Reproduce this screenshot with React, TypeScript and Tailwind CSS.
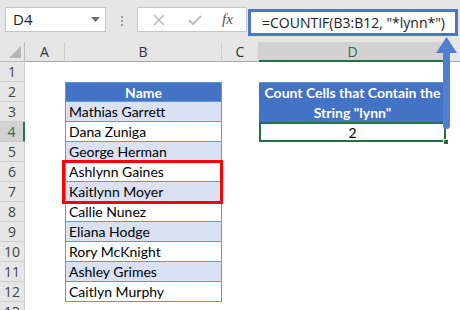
const names = [
  "Mathias Garrett",
  "Dana Zuniga",
  "George Herman",
  "Ashlynn Gaines",
  "Kaitlynn Moyer",
  "Callie Nunez",
  "Eliana Hodge",
  "Rory McKnight",
  "Ashley Grimes",
  "Caitlyn Murphy",
];

const cellFont = { fontFamily: "Lato, 'Liberation Sans', sans-serif" };

const RowLabel = ({ n }: { n: number }) => (
  <div
    className={
      n === 4
        ? "bg-[#d2d2d2] border-b border-[#c8c8c8] border-r-2 border-r-[#217346] text-[#2b6a47] text-[14px] flex items-center justify-center"
        : "bg-[#e6e6e6] border-b border-r border-[#cfcfcf] text-[#444] text-[14px] flex items-center justify-center"
    }
    style={{ fontFamily: "'Open Sans', sans-serif" }}
  >
    {n}
  </div>
);

const App = () => {
  const rows = Array.from({ length: 13 }, (_, i) => i + 1);

  return (
    <main className="w-[460px] h-[310px] overflow-hidden bg-white relative">
      {/* formula bar */}
      <header className="h-[42px] bg-[#e6e6e6] flex items-start">
        <div className="ml-[5px] mt-[7px] w-[101px] h-[25px] bg-white border border-[#c6c6c6] flex items-center justify-between pl-[7px] pr-[5px]">
          <span className="text-[15px] text-[#222]" style={{ fontFamily: "'Open Sans', sans-serif" }}>
            D4
          </span>
          <svg width="9" height="5" viewBox="0 0 9 5">
            <polygon points="0,0 9,0 4.5,5" fill="#6f6f6f" />
          </svg>
        </div>
        <div className="w-[31px] h-[42px] flex flex-col items-center justify-center gap-[2px]">
          <span className="w-[2px] h-[2px] bg-[#9a9a9a]" />
          <span className="w-[2px] h-[2px] bg-[#9a9a9a]" />
          <span className="w-[2px] h-[2px] bg-[#9a9a9a]" />
        </div>
        <div className="mt-[7px] w-[110px] h-[25px] bg-white border border-[#c6c6c6] flex items-center">
          <svg width="14" height="14" viewBox="0 0 14 14" className="ml-[14px]">
            <path d="M2 2 L12 12 M12 2 L2 12" stroke="#bdbdbd" strokeWidth="1.6" />
          </svg>
          <svg width="16" height="14" viewBox="0 0 16 14" className="ml-[21px]">
            <path d="M2 7 L6 11 L14 3" stroke="#bdbdbd" strokeWidth="2" fill="none" />
          </svg>
          <span
            className="ml-[19px] text-[15px] italic text-[#555]"
            style={{ fontFamily: "'Liberation Serif', serif" }}
          >
            fx
          </span>
        </div>
        <div className="ml-[1px] mt-[9px] w-[210px] h-[27px] bg-white border-[3px] border-[#4a78c8] flex items-center pl-[11px]">
          <span className="text-[14px] text-[#222] whitespace-nowrap" style={{ fontFamily: "'Open Sans', sans-serif" }}>
            =COUNTIF(B3:B12, "*lynn*")
          </span>
        </div>
      </header>

      {/* sheet */}
      <section className="grid grid-cols-[25px_40px_157px_37px_187px_1fr] auto-rows-[20px]">
        {/* column headers */}
        <div className="bg-[#e6e6e6] border-r border-b border-[#bdbdbd] flex items-end justify-end p-[3px]">
          <svg width="12" height="12" viewBox="0 0 12 12">
            <polygon points="12,0 12,12 0,12" fill="#b4b4b4" />
          </svg>
        </div>
        {["A", "B", "C"].map((c) => (
          <div
            key={c}
            className="bg-[#e6e6e6] border-r border-r-[#cfcfcf] border-b border-b-[#a8a8a8] text-[14px] text-[#333] flex items-center justify-center"
            style={{ fontFamily: "'Open Sans', sans-serif" }}
          >
            {c}
          </div>
        ))}
        <div
          className="bg-[#d2d2d2] border-b-2 border-[#217346] text-[14px] text-[#217346] flex items-center justify-center"
          style={{ fontFamily: "'Open Sans', sans-serif" }}
        >
          D
        </div>
        <div className="bg-[#e6e6e6] border-l border-l-[#cfcfcf] border-b border-b-[#a8a8a8]" />

        {rows.map((n) => {
          const name = n >= 3 && n <= 12 ? names[n - 3] : null;
          const shaded = n >= 3 && n % 2 === 1;
          return [
            <RowLabel key={`l${n}`} n={n} />,
            <div key={`a${n}`} />,
            n === 2 ? (
              <div
                key={`b${n}`}
                className="bg-[#4472c4] border border-[#5b9bd5] text-white font-bold text-[14px] flex items-center justify-center"
                style={cellFont}
              >
                Name
              </div>
            ) : name ? (
              <div
                key={`b${n}`}
                className={`${shaded ? "bg-[#d9e1f2]" : "bg-white"} border-x border-b border-[#5b9bd5] text-[14px] text-black flex items-center pl-[3px]`}
                style={cellFont}
              >
                {name}
              </div>
            ) : (
              <div key={`b${n}`} />
            ),
            <div key={`c${n}`} />,
            n === 2 ? (
              <div
                key={`d${n}`}
                className="row-span-2 bg-[#4472c4] border-t border-[#5b9bd5] text-white font-bold text-[14px] leading-[20px] flex items-center justify-center text-center"
                style={cellFont}
              >
                Count Cells that Contain the
                <br />
                String "lynn"
              </div>
            ) : n === 3 ? null : n === 4 ? (
              <div
                key={`d${n}`}
                className="border-2 border-[#217346] text-[14px] text-black flex items-center justify-center"
                style={cellFont}
              >
                2
              </div>
            ) : (
              <div key={`d${n}`} />
            ),
            <div key={`e${n}`} />,
          ];
        })}
      </section>

      {/* highlight box over rows 6-7 */}
      <div className="absolute left-[62px] top-[160px] w-[161px] h-[44px] border-[3px] border-[#ff0000]" />

      {/* fill handle */}
      <div className="absolute left-[443px] top-[139px] w-[6px] h-[6px] bg-[#217346] border border-white" />

      {/* arrow */}
      <svg className="absolute left-[435px] top-[36px]" width="24" height="96" viewBox="0 0 24 96">
        <polygon points="11.5,1 22,17 1,17" fill="#4f7fd0" />
        <rect x="8" y="14" width="7" height="79" rx="3.5" fill="#4f7fd0" />
      </svg>
    </main>
  );
};

export default App;
